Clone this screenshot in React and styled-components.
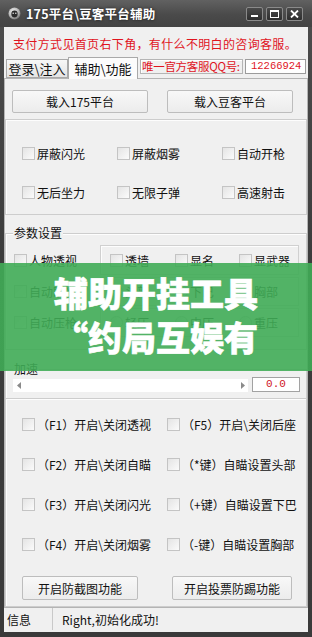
import React from "react";
import styled, { createGlobalStyle } from "styled-components";

const GlobalStyle = createGlobalStyle`
  html, body { margin: 0; padding: 0; background: #3b3b3b; }
  body { font-family: "Noto Sans CJK SC", "Noto Sans", sans-serif; color: #111; }
  * { box-sizing: border-box; }
`;

const Window = styled.div`
  position: relative;
  width: 312px;
  height: 637px;
  background: linear-gradient(#4d4d4d, #3c3c3c 40%, #3a3a3a);
  display: flex;
  flex-direction: column;
  overflow: hidden;
`;

const TitleBar = styled.div`
  height: 27px;
  flex: none;
  display: flex;
  align-items: center;
  padding: 0 9px 0 8px;
  background: linear-gradient(#616161, #4a4a4a 55%, #434343);
`;

const TitleText = styled.div`
  margin-left: 5px;
  color: #fff;
  font-weight: 700;
  font-size: 12.5px;
  letter-spacing: 0.2px;
  text-shadow: 0 0 3px rgba(0, 0, 0, 0.7);
  white-space: nowrap;
`;

const WinButtons = styled.div`
  margin-left: auto;
  display: flex;
  gap: 3px;
  margin-top: 1px;
`;

const WinButton = styled.div`
  width: 17px;
  height: 14px;
  border: 1px solid #8a8a8a;
  border-radius: 2px;
  background: linear-gradient(#4a4a4a, #2e2e2e);
  display: flex;
  align-items: center;
  justify-content: center;
`;

const Body = styled.div`
  flex: 1;
  margin: 0 4px 5px;
  background: #f0f0f0;
  display: flex;
  flex-direction: column;
`;

const Notice = styled.div`
  margin-top: 9px;
  padding-left: 9px;
  height: 16px;
  line-height: 16px;
  color: #e0141e;
  font-size: 12px;
  letter-spacing: 0.35px;
  white-space: nowrap;
`;

const TabRow = styled.div`
  margin-top: 5px;
  height: 21px;
  display: flex;
  align-items: flex-end;
  padding-left: 2px;
  position: relative;
  z-index: 1;
`;

const Tab = styled.div`
  width: ${(p) => p.w}px;
  height: ${(p) => (p.active ? 22 : 19)}px;
  margin-bottom: ${(p) => (p.active ? -1 : 0)}px;
  border: 1px solid #a9a9a9;
  border-bottom: ${(p) => (p.active ? "none" : "1px solid #a9a9a9")};
  background: ${(p) => (p.active ? "#fcfcfc" : "linear-gradient(#f7f7f7, #e4e4e4)")};
  font-size: 13px;
  display: flex;
  align-items: center;
  justify-content: center;
  white-space: nowrap;
`;

const QQLabel = styled.div`
  align-self: flex-start;
  margin: 2px 0 0 2px;
  width: 103px;
  height: 15px;
  border: 1px solid #b5b5b5;
  box-shadow: inset 1px 1px 0 #fff;
  color: #e0141e;
  font-size: 11.5px;
  letter-spacing: -0.3px;
  line-height: 13px;
  padding-left: 1px;
  white-space: nowrap;
  overflow: hidden;
`;

const QQInput = styled.div`
  align-self: flex-start;
  margin: 2px 0 0 2px;
  width: 61px;
  height: 15px;
  border: 1px solid #9c9c9c;
  background: #fff;
  color: #e0141e;
  font-family: "Liberation Mono", monospace;
  font-size: 10.5px;
  line-height: 13px;
  padding-left: 5px;
`;

const Panel = styled.div`
  height: 530px;
  flex: none;
  border: 1px solid #b4b4b4;
  display: flex;
  flex-direction: column;
  background: #f0f0f0;
`;

const ButtonRow = styled.div`
  margin-top: ${(p) => p.mt}px;
  padding-left: ${(p) => p.pl}px;
  display: flex;
  gap: ${(p) => p.gap}px;
`;

const Button = styled.div`
  width: ${(p) => p.w}px;
  height: ${(p) => p.h}px;
  border: 1px solid #bdbdbd;
  border-radius: 2px;
  background: linear-gradient(#f8f8f8, #ececec);
  font-size: 12px;
  color: #111;
  display: flex;
  align-items: center;
  justify-content: center;
  white-space: nowrap;
`;

const Group = styled.div`
  position: relative;
  margin-top: ${(p) => p.mt}px;
  height: ${(p) => p.h}px;
  flex: none;
  border: 1px solid #cdcdcd;
  border-bottom: ${(p) => (p.open ? "none" : "1px solid #cdcdcd")};
  box-shadow: inset 1px 1px 0 #fdfdfd;
  padding: ${(p) => p.pad};
`;

const Legend = styled.span`
  position: absolute;
  top: -9px;
  left: 7px;
  padding: 0 1px;
  background: #f0f0f0;
  font-size: 12px;
  line-height: 16px;
  white-space: nowrap;
`;

const CheckGrid = styled.div`
  display: grid;
  grid-template-columns: ${(p) => p.cols};
  grid-auto-rows: 20px;
  row-gap: ${(p) => p.gap}px;
`;

const CheckItem = styled.div`
  display: flex;
  align-items: center;
  gap: 2px;
  height: 20px;
  font-size: 12px;
  white-space: nowrap;
`;

const Box = styled.span`
  flex: none;
  width: 13px;
  height: 13px;
  border: 1px solid #c4c4c4;
  background: linear-gradient(135deg, #e4e4e4, #fbfbfb);
  border-radius: ${(p) => (p.round ? "50%" : "0")};
`;

const ParamGrid = styled.div`
  display: grid;
  grid-template-columns: 94px 199px;
  grid-template-rows: 30px 29px 29px;
  row-gap: 2px;
  align-items: center;
`;

const ParamLeft = styled.div`
  padding-left: 8px;
`;

const SubBox = styled.div`
  height: 100%;
  border: 1px solid #d0d0d0;
  box-shadow: inset 1px 1px 0 #fdfdfd;
  display: grid;
  grid-template-columns: 65px 64px auto;
  align-items: center;
  padding-left: 9px;
`;

const SliderRow = styled.div`
  display: flex;
  align-items: flex-end;
  padding-left: 7px;
`;

const Track = styled.div`
  width: 235px;
  height: 13px;
  background: #fff;
  display: flex;
  align-items: center;
  justify-content: space-between;
  padding: 0 3px 0 4px;
`;

const ValueBox = styled.div`
  margin-left: 4px;
  width: 48px;
  height: 15px;
  border: 1px solid #a2a2a2;
  background: #fff;
  color: #d0141e;
  font-family: "Liberation Mono", monospace;
  font-size: 11px;
  line-height: 13px;
  text-align: center;
`;

const StatusBar = styled.div`
  height: 22px;
  display: flex;
  align-items: stretch;
  font-size: 12px;
`;

const StatusCell = styled.div`
  width: ${(p) => (p.w ? `${p.w}px` : "auto")};
  flex: ${(p) => (p.w ? "none" : "1")};
  padding-left: ${(p) => p.pl}px;
  border-right: ${(p) => (p.w ? "1px solid #c9c9c9" : "none")};
  display: flex;
  align-items: center;
  white-space: nowrap;
`;

const Overlay = styled.div`
  position: absolute;
  top: 263px;
  left: 0;
  width: 312px;
  height: 108px;
  background: rgba(64, 172, 87, 0.9);
  color: #fff;
  text-align: center;
  font-size: 34px;
  font-weight: 900;
  line-height: 44px;
  padding-top: 8px;
  white-space: nowrap;
  overflow: hidden;
  -webkit-text-stroke: 0.6px #fff;
`;

const Check = ({ children, round }) => (
  <CheckItem>
    <Box round={round} />
    <span>{children}</span>
  </CheckItem>
);

const AppIcon = () => (
  <svg width="13" height="13" viewBox="0 0 13 13">
    <defs>
      <radialGradient id="ig" cx="40%" cy="35%" r="70%">
        <stop offset="0" stopColor="#f4f4f4" />
        <stop offset="0.6" stopColor="#b9b9b9" />
        <stop offset="1" stopColor="#6c6c6c" />
      </radialGradient>
    </defs>
    <circle cx="6.5" cy="6.5" r="6" fill="url(#ig)" />
    <ellipse cx="6.5" cy="7" rx="3.2" ry="3.4" fill="#2b2b2b" />
    <circle cx="5.2" cy="6.3" r="0.8" fill="#ddd" />
    <circle cx="7.8" cy="6.3" r="0.8" fill="#ddd" />
  </svg>
);

export default function App() {
  return (
    <>
      <GlobalStyle />
      <Window>
        <TitleBar>
          <AppIcon />
          <TitleText>175平台\豆客平台辅助</TitleText>
          <WinButtons>
            <WinButton>
              <svg width="9" height="8" viewBox="0 0 9 8">
                <rect x="1" y="5" width="7" height="2" fill="#fff" />
              </svg>
            </WinButton>
            <WinButton>
              <svg width="9" height="8" viewBox="0 0 9 8">
                <rect x="0.5" y="0.5" width="8" height="7" fill="none" stroke="#fff" strokeWidth="1" />
                <rect x="0.5" y="0.5" width="8" height="1.5" fill="#fff" />
              </svg>
            </WinButton>
            <WinButton>
              <svg width="9" height="8" viewBox="0 0 9 8">
                <path d="M1 0.5 L8 7.5 M8 0.5 L1 7.5" stroke="#fff" strokeWidth="1.8" />
              </svg>
            </WinButton>
          </WinButtons>
        </TitleBar>
        <Body>
          <Notice>支付方式见首页右下角，有什么不明白的咨询客服。</Notice>
          <TabRow>
            <Tab w={62}>登录\注入</Tab>
            <Tab w={70} active>辅助\功能</Tab>
            <QQLabel>唯一官方客服QQ号:</QQLabel>
            <QQInput>12266924</QQInput>
          </TabRow>
          <Panel>
            <ButtonRow mt={11} pl={7} gap={19}>
              <Button w={136} h={23}>载入175平台</Button>
              <Button w={126} h={23}>载入豆客平台</Button>
            </ButtonRow>
            <Group mt={6} h={96} pad="23px 0 0 16px">
              <CheckGrid cols="95px 105px auto" gap={19}>
                <Check>屏蔽闪光</Check>
                <Check>屏蔽烟雾</Check>
                <Check>自动开枪</Check>
                <Check>无后坐力</Check>
                <Check>无限子弹</Check>
                <Check>高速射击</Check>
              </CheckGrid>
            </Group>
            <Group mt={18} h={117} pad="11px 0 0 0">
              <Legend>参数设置</Legend>
              <ParamGrid>
                <ParamLeft><Check>人物透视</Check></ParamLeft>
                <SubBox>
                  <Check>透墙</Check>
                  <Check>显名</Check>
                  <Check>显武器</Check>
                </SubBox>
                <ParamLeft><Check>自动瞄准</Check></ParamLeft>
                <SubBox>
                  <Check round>头部</Check>
                  <Check round>下巴</Check>
                  <Check round>胸部</Check>
                </SubBox>
                <ParamLeft><Check>自动压枪</Check></ParamLeft>
                <SubBox>
                  <Check round>轻压</Check>
                  <Check round>中压</Check>
                  <Check round>重压</Check>
                </SubBox>
              </ParamGrid>
            </Group>
            <Group mt={19} h={29} open pad="7px 0 0 0">
              <Legend>加速</Legend>
              <SliderRow>
                <Track>
                  <svg width="4" height="7" viewBox="0 0 4 7"><path d="M4 0 L0 3.5 L4 7 Z" fill="#8a8a8a" /></svg>
                  <svg width="4" height="7" viewBox="0 0 4 7"><path d="M0 0 L4 3.5 L0 7 Z" fill="#8a8a8a" /></svg>
                </Track>
                <ValueBox>0.0</ValueBox>
              </SliderRow>
            </Group>
            <Group mt={0} h={209} pad="15px 0 0 16px">
              <CheckGrid cols="145px auto" gap={20}>
                <Check>（F1）开启\关闭透视</Check>
                <Check>（F5）开启\关闭后座</Check>
                <Check>（F2）开启\关闭自瞄</Check>
                <Check>（*键）自瞄设置头部</Check>
                <Check>（F3）开启\关闭闪光</Check>
                <Check>（+键）自瞄设置下巴</Check>
                <Check>（F4）开启\关闭烟雾</Check>
                <Check>（-键）自瞄设置胸部</Check>
              </CheckGrid>
              <ButtonRow mt={22} pl={0} gap={34}>
                <Button w={116} h={24}>开启防截图功能</Button>
                <Button w={120} h={24}>开启投票防踢功能</Button>
              </ButtonRow>
            </Group>
          </Panel>
          <StatusBar>
            <StatusCell w={49} pl={3}>信息</StatusCell>
            <StatusCell pl={9}>Right,初始化成功!</StatusCell>
          </StatusBar>
        </Body>
        <Overlay>
          辅助开挂工具
          <br />
          “约局互娱有
        </Overlay>
      </Window>
    </>
  );
}
